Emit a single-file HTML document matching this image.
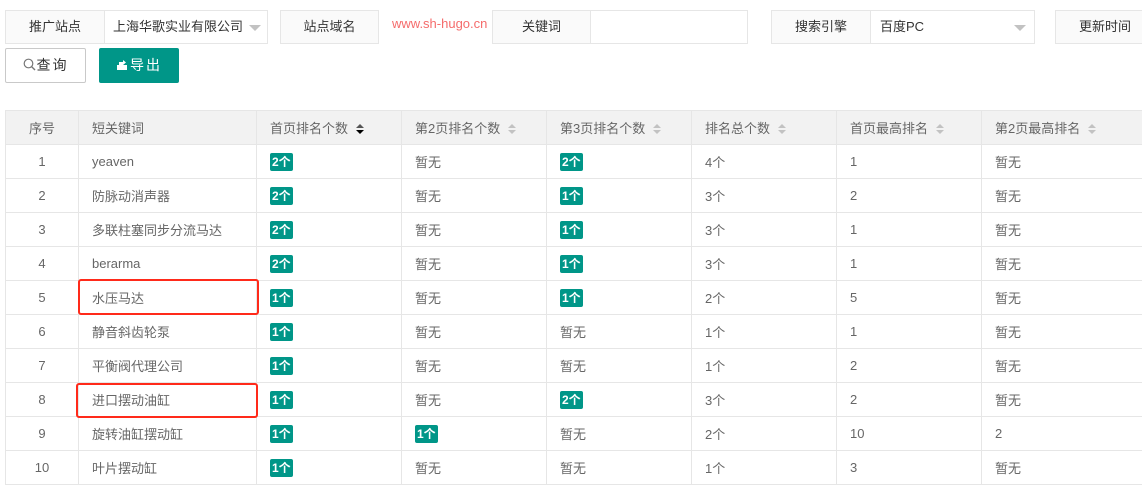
<!DOCTYPE html>
<html><head><meta charset="utf-8"><style>
*{box-sizing:border-box;margin:0;padding:0}
body{width:1142px;height:481px;overflow:hidden;background:#fff;font-family:"Liberation Sans","Noto Sans CJK SC",sans-serif;font-size:13px;color:#333;position:relative}
.a{position:absolute}
.lab{position:absolute;border:1px solid #e6e6e6;background:#fafafa;height:34px;line-height:32px;text-align:center;color:#333;font-size:13px}
.inp{position:absolute;border:1px solid #e6e6e6;background:#fff;height:34px;line-height:32px;padding-left:10px;color:#333}
.arr{position:absolute;top:14px;width:0;height:0;border-left:6px solid transparent;border-right:6px solid transparent;border-top:6px solid #c2c2c2}
table{position:absolute;left:5px;top:110px;border-collapse:collapse;table-layout:fixed;width:1146px}
td,th{border:1px solid #e6e6e6;height:34px;padding:0 13px;text-align:left;font-weight:normal;color:#666;font-size:13px;white-space:nowrap;overflow:hidden}
th{background:#f2f2f2}
td.c,th.c{text-align:center;padding:0}
.b{display:inline-block;background:#009688;color:#fff;font-size:12px;height:18px;line-height:18px;padding:0 2px;border-radius:2px;font-weight:bold}
.s{display:inline-block;vertical-align:middle;margin-left:8px;width:9px;height:11px;position:relative}
.s:before{content:"";position:absolute;top:0;left:0;border-left:4.5px solid transparent;border-right:4.5px solid transparent;border-bottom:4.5px solid #c2c2c2}
.s:after{content:"";position:absolute;top:6px;left:0;border-left:4.5px solid transparent;border-right:4.5px solid transparent;border-top:4.5px solid #c2c2c2}
.s.d:after{border-top-color:#000}.s.d:before{border-bottom-color:#555}
.red{position:absolute;border:2px solid #ff2a1a;border-radius:3px}
</style></head><body>
<div class="lab" style="left:5px;top:10px;width:100px">推广站点</div>
<div class="inp" style="left:104px;top:10px;width:164px;padding-left:8px">上海华歌实业有限公司<div class="arr" style="left:144px"></div></div>
<div class="lab" style="left:280px;top:10px;width:99px">站点域名</div>
<div class="a" style="left:392px;top:16px;color:#f56c6c;font-size:13px">www.sh-hugo.cn</div>
<div class="lab" style="left:492px;top:10px;width:99px">关键词</div>
<div class="inp" style="left:590px;top:10px;width:158px"></div>
<div class="lab" style="left:771px;top:10px;width:100px">搜索引擎</div>
<div class="inp" style="left:870px;top:10px;width:165px;padding-left:9px">百度PC<div class="arr" style="left:143px"></div></div>
<div class="lab" style="left:1055px;top:10px;width:100px">更新时间</div>
<div class="a" style="left:5px;top:48px;width:81px;height:35px;border:1px solid #c9c9c9;border-radius:2px;line-height:33px;text-align:center;color:#333;font-size:14px;letter-spacing:2px"><svg width="13" height="13" viewBox="0 0 13 13" style="vertical-align:-1px;margin-right:1px"><circle cx="5.5" cy="5.5" r="4.3" fill="none" stroke="#777" stroke-width="1.2"/><path d="M8.6 8.6L12 12" stroke="#777" stroke-width="1.4"/></svg>查询</div>
<div class="a" style="left:99px;top:48px;width:80px;height:35px;background:#009688;border-radius:2px;line-height:35px;text-align:center;color:#fff;font-size:14px;letter-spacing:2px"><svg width="12" height="13" viewBox="0 0 12 13" style="vertical-align:-1px;margin-right:2px"><path d="M1 7h10v5H1z" fill="#fff"/><path d="M3 7V4h4V2l3 2.5L7 7" fill="#fff"/></svg>导出</div>
<table>
<colgroup><col style="width:73px"><col style="width:178px"><col style="width:145px"><col style="width:145px"><col style="width:145px"><col style="width:145px"><col style="width:145px"><col style="width:170px"></colgroup>
<tr><th class="c">序号</th><th>短关键词</th><th>首页排名个数<span class="s d"></span></th><th>第2页排名个数<span class="s"></span></th><th>第3页排名个数<span class="s"></span></th><th>排名总个数<span class="s"></span></th><th>首页最高排名<span class="s"></span></th><th>第2页最高排名<span class="s"></span></th></tr>
<tr><td class="c">1</td><td>yeaven</td><td><span class="b">2个</span></td><td>暂无</td><td><span class="b">2个</span></td><td>4个</td><td>1</td><td>暂无</td></tr>
<tr><td class="c">2</td><td>防脉动消声器</td><td><span class="b">2个</span></td><td>暂无</td><td><span class="b">1个</span></td><td>3个</td><td>2</td><td>暂无</td></tr>
<tr><td class="c">3</td><td>多联柱塞同步分流马达</td><td><span class="b">2个</span></td><td>暂无</td><td><span class="b">1个</span></td><td>3个</td><td>1</td><td>暂无</td></tr>
<tr><td class="c">4</td><td>berarma</td><td><span class="b">2个</span></td><td>暂无</td><td><span class="b">1个</span></td><td>3个</td><td>1</td><td>暂无</td></tr>
<tr><td class="c">5</td><td>水压马达</td><td><span class="b">1个</span></td><td>暂无</td><td><span class="b">1个</span></td><td>2个</td><td>5</td><td>暂无</td></tr>
<tr><td class="c">6</td><td>静音斜齿轮泵</td><td><span class="b">1个</span></td><td>暂无</td><td>暂无</td><td>1个</td><td>1</td><td>暂无</td></tr>
<tr><td class="c">7</td><td>平衡阀代理公司</td><td><span class="b">1个</span></td><td>暂无</td><td>暂无</td><td>1个</td><td>2</td><td>暂无</td></tr>
<tr><td class="c">8</td><td>进口摆动油缸</td><td><span class="b">1个</span></td><td>暂无</td><td><span class="b">2个</span></td><td>3个</td><td>2</td><td>暂无</td></tr>
<tr><td class="c">9</td><td>旋转油缸摆动缸</td><td><span class="b">1个</span></td><td><span class="b">1个</span></td><td>暂无</td><td>2个</td><td>10</td><td>2</td></tr>
<tr><td class="c">10</td><td>叶片摆动缸</td><td><span class="b">1个</span></td><td>暂无</td><td>暂无</td><td>1个</td><td>3</td><td>暂无</td></tr>
</table>
<div class="red" style="left:78px;top:279px;width:181px;height:36px"></div>
<div class="red" style="left:76px;top:383px;width:182px;height:35px"></div>
</body></html>
